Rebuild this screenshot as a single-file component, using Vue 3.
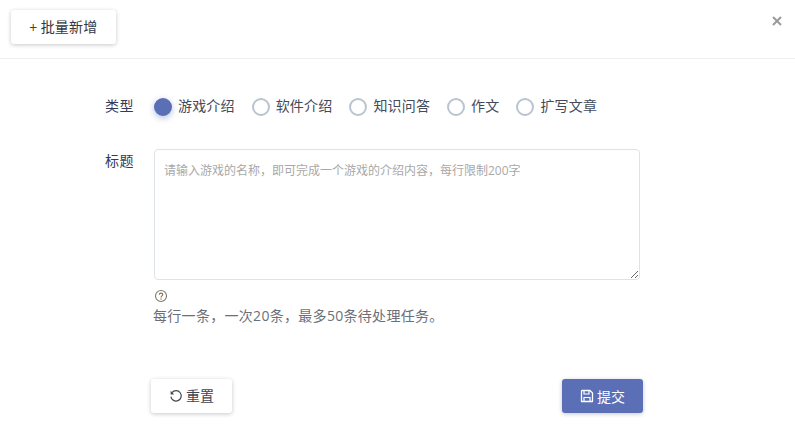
<script setup>
const types = [
  { label: '游戏介绍', checked: true },
  { label: '软件介绍', checked: false },
  { label: '知识问答', checked: false },
  { label: '作文', checked: false },
  { label: '扩写文章', checked: false }
]
</script>

<template>
  <div class="dialog">
    <header class="head">
      <button class="btn light batch"><span class="plus">+</span><span class="btxt">批量新增</span></button>
      <svg class="close" viewBox="0 0 10 10" width="10" height="10">
        <path d="M1 1 L9 9 M9 1 L1 9" stroke="#9a9a9a" stroke-width="2" fill="none" />
      </svg>
    </header>
    <main class="body">
      <div class="row type-row">
        <label class="lbl type-lbl">类型</label>
        <div class="radios">
          <div v-for="t in types" :key="t.label" class="radio">
            <span class="dot" :class="{ on: t.checked }"></span>
            <span class="rtext">{{ t.label }}</span>
          </div>
        </div>
      </div>
      <div class="row title-row">
        <label class="lbl">标题</label>
        <div class="field">
          <textarea class="ta" placeholder="请输入游戏的名称，即可完成一个游戏的介绍内容，每行限制200字"></textarea>
          <svg class="help" viewBox="0 0 14 14" width="14" height="14">
            <circle cx="7" cy="7" r="5.5" fill="none" stroke="#7d7a72" stroke-width="1.1" />
            <path d="M5.3 5.7 C5.3 3.6 8.8 3.6 8.8 5.6 C8.8 6.9 7 6.8 7 8.4" fill="none" stroke="#8a6d3b" stroke-width="1.1" />
            <circle cx="7" cy="10" r="0.7" fill="#8a6d3b" />
          </svg>
          <p class="tip">每行一条，一次20条，最多50条待处理任务。</p>
        </div>
      </div>
      <div class="actions">
        <button class="btn light reset">
          <svg viewBox="0 0 14 14" width="14" height="14">
            <path d="M3 3.6 A5.2 5.2 0 1 1 1.9 7.6" fill="none" stroke="#444a55" stroke-width="1.2" />
            <path d="M1.6 1.8 L1.6 5.4 L5.2 5.4 Z" fill="#444a55" />
          </svg>
          <span class="btxt">重置</span>
        </button>
        <button class="btn primary submit">
          <svg viewBox="0 0 14 14" width="14" height="14">
            <path d="M2 1.5 H10 L12.5 4 V12.5 H1.5 V2 Z" fill="none" stroke="#fff" stroke-width="1.3" stroke-linejoin="round" />
            <path d="M4 2 V5 H9 V2 M4 12 V8.5 H10 V12" fill="none" stroke="#fff" stroke-width="1.2" />
          </svg>
          <span>提交</span>
        </button>
      </div>
    </main>
  </div>
</template>

<style>
html, body { margin: 0; background: #fff; }
</style>

<style scoped>
.dialog {
  width: 795px;
  height: 434px;
  overflow: hidden;
  background: #fff;
  font-family: "Open Sans", "Noto Sans CJK SC", sans-serif;
  font-size: 14px;
  color: #495057;
}
.head {
  height: 58px;
  box-sizing: content-box;
  border-bottom: 1px solid #eceef1;
  padding: 0 13px 0 11px;
  display: flex;
  justify-content: space-between;
  align-items: flex-start;
}
.btn {
  height: 34px;
  border: 0;
  border-radius: 3px;
  font: inherit;
  display: inline-flex;
  align-items: center;
  justify-content: center;
  gap: 3px;
  padding: 0;
  cursor: pointer;
}
.btxt { margin-bottom: 2px; }
.light {
  background: #fff;
  color: #3f4651;
  box-shadow: 0 1px 4px rgba(0, 0, 0, 0.22);
}
.batch { width: 105px; margin-top: 10px; color: #33373f; letter-spacing: 0.25px; }
.plus { color: #5a3c14; }
.close { margin-top: 16px; }
.body { padding: 0 152px 0 105px; }
.row { display: flex; }
.lbl { width: 49px; flex: none; color: #343a5c; line-height: 20px; letter-spacing: 0.4px; }
.type-lbl { margin-top: -1px; }
.type-row { margin-top: 38px; height: 20px; }
.radios { display: flex; gap: 17px; }
.radio { display: flex; align-items: center; gap: 6px; }
.dot {
  width: 18px;
  height: 18px;
  box-sizing: border-box;
  border-radius: 50%;
  border: 2px solid #b9c4d0;
  background: #fff;
}
.dot.on {
  border-color: #5a6fb5;
  background: #5a6fb5;
  box-shadow: 0 2px 6px rgba(90, 111, 181, 0.45);
}
.rtext { color: #444a58; line-height: 20px; letter-spacing: 0.17px; margin-bottom: 2px; }
.title-row { margin-top: 32px; }
.title-row .lbl { padding-top: 2px; }
.field { width: 486px; }
.ta {
  display: block;
  width: 486px;
  height: 131px;
  box-sizing: border-box;
  border: 1px solid #dde3e8;
  border-radius: 4px;
  padding: 12px 9px 9px;
  font: inherit;
  font-size: 12px;
  line-height: 18px;
  outline: none;
}
.ta::placeholder { color: #a8a8a8; opacity: 1; }
.help { display: block; margin-top: 9px; }
.tip { margin: 3px 0 0 -1px; line-height: 20px; color: #6b7078; letter-spacing: 0.3px; }
.actions {
  margin: 53px 0 0 46px;
  display: flex;
  justify-content: space-between;
  width: 492px;
}
.reset, .submit { width: 81px; }
.primary { background: #5a6fb5; color: #fff; box-shadow: 0 1px 4px rgba(0, 0, 0, 0.22); }
</style>
